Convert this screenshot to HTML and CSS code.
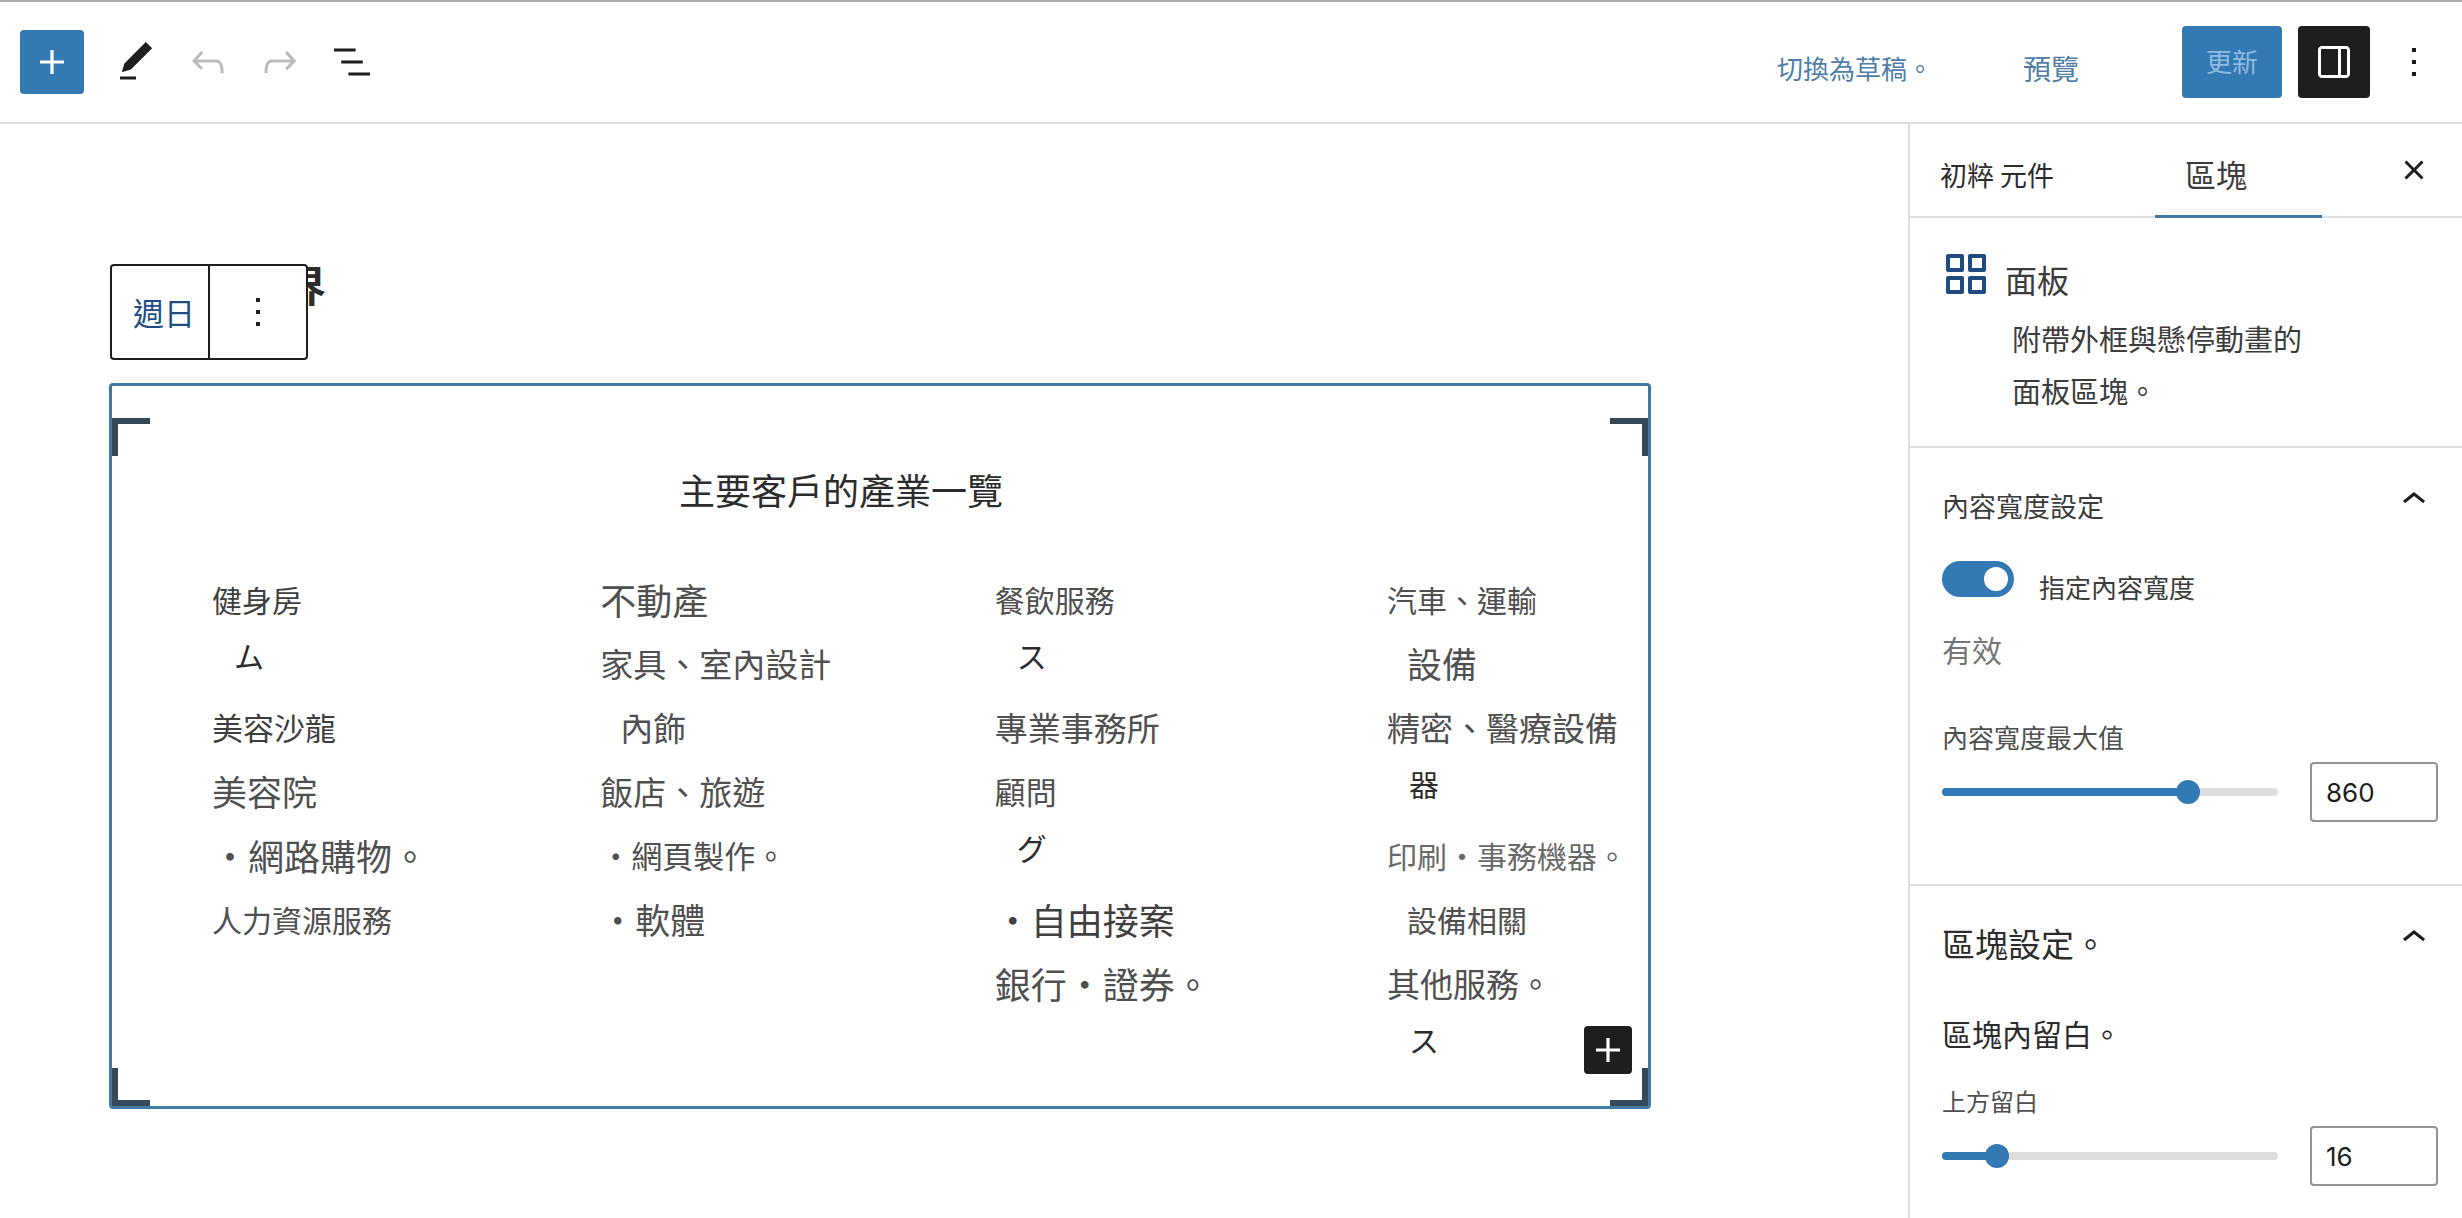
FILE: index.html
```html
<!DOCTYPE html>
<html lang="zh-Hant">
<head>
<meta charset="utf-8">
<meta name="viewport" content="width=device-width, initial-scale=1">
<title>區塊編輯器</title>
<link rel="stylesheet" href="styles.css">
</head>
<body>
<header class="topbar">
  <button class="btn btn-insert" type="button" aria-label="新增區塊"><svg class="icon" viewBox="0 0 24 24"><path d="M18 11.2h-5.2V6h-1.6v5.2H6v1.6h5.2V18h1.6v-5.2H18z"/></svg></button>
  <div class="tools">
    <button class="btn-icon" type="button" aria-label="編輯"><svg class="icon" viewBox="0 0 24 24"><path d="M20.1 5.1L16.9 2 6.2 12.7l-1.3 4.4 4.5-1.3L20.1 5.1zM4 20.8h8v-1.5H4v1.5z"/></svg></button>
    <button class="btn-icon muted" type="button" aria-label="復原"><svg class="icon" viewBox="0 0 24 24"><path d="M18.3 11.7c-.6-.6-1.4-.9-2.3-.9H6.7l2.9-3.3-1.1-1-4.5 5L8.5 16l1-1-2.7-2.7H16c.5 0 .9.2 1.3.5 1 1 1 3.4 1 4.5v.3h1.5v-.2c0-1.5 0-4.3-1.5-5.7z"/></svg></button>
    <button class="btn-icon muted" type="button" aria-label="重做"><svg class="icon" viewBox="0 0 24 24"><path d="M15.6 6.5l-1.1 1 2.9 3.3H8c-.9 0-1.7.3-2.3.9-1.4 1.5-1.4 4.2-1.4 5.6v.2h1.5v-.3c0-1.1 0-3.5 1-4.5.3-.3.7-.5 1.3-.5h9.2L14.5 15l1.1 1.1 4.6-4.6-4.6-5z"/></svg></button>
    <button class="btn-icon" type="button" aria-label="清單檢視"><svg class="icon" viewBox="0 0 24 24"><path d="M13.8 5.2H3v1.5h10.8V5.2zm-3.6 12v1.5H21v-1.5H10.2zm7.2-6H6.6v1.5h10.8v-1.5z"/></svg></button>
  </div>
  <nav class="links">
    <a class="link" href="#draft">切換為草稿。</a>
    <a class="link link-preview" href="#preview">預覽</a>
  </nav>
  <button class="btn btn-update" type="button">更新</button>
  <button class="btn btn-settings" type="button" aria-label="設定"><svg class="icon" viewBox="0 0 24 24"><path d="M18 4H6c-1.1 0-2 .9-2 2v12c0 1.1.9 2 2 2h12c1.1 0 2-.9 2-2V6c0-1.1-.9-2-2-2zm-4 14.5H6c-.3 0-.5-.2-.5-.5V6c0-.3.2-.5.5-.5h8v13zm4.5-.5c0 .3-.2.5-.5.5h-2.5v-13H18c.3 0 .5.2.5.5v12z"/></svg></button>
  <button class="btn-icon" type="button" aria-label="選項"><svg class="icon" viewBox="0 0 24 24"><path d="M13 19h-2v-2h2v2zm0-6h-2v-2h2v2zm0-6h-2V5h2v2z"/></svg></button>
</header>

<div class="workspace">
  <main class="canvas">
    <h1 class="page-title">界</h1>
    <div class="block-toolbar">
      <button class="toolbar-type" type="button">週日</button>
      <button class="toolbar-more" type="button" aria-label="更多"><svg class="icon" viewBox="0 0 24 24"><path d="M13 19h-2v-2h2v2zm0-6h-2v-2h2v2zm0-6h-2V5h2v2z"/></svg></button>
    </div>

    <section class="block">
      <span class="corner corner-tl"></span>
      <span class="corner corner-tr"></span>
      <span class="corner corner-bl"></span>
      <span class="corner corner-br"></span>
      <h2 class="block-title">主要客戶的產業一覽</h2>
      <div class="columns">
        <ul class="column">
          <li class="s dark">健身房</li>
          <li class="wrap">ム</li>
          <li class="sm dark">美容沙龍</li>
          <li class="l">美容院</li>
          <li class="xl">・網路購物。</li>
          <li class="s">人力資源服務</li>
        </ul>
        <ul class="column">
          <li class="xl">不動產</li>
          <li class="m">家具、室內設計</li>
          <li class="m indent">內飾</li>
          <li class="m">飯店、旅遊</li>
          <li class="sm">・網頁製作。</li>
          <li class="l">・軟體</li>
        </ul>
        <ul class="column">
          <li class="s">餐飲服務</li>
          <li class="wrap">ス</li>
          <li class="m">專業事務所</li>
          <li class="sm">顧問</li>
          <li class="wrap">グ</li>
          <li class="xl dark">・自由接案</li>
          <li class="xl">銀行・證券。</li>
        </ul>
        <ul class="column">
          <li class="s">汽車、運輸</li>
          <li class="l indent">設備</li>
          <li class="m">精密、醫療設備</li>
          <li class="wrap">器</li>
          <li class="s light">印刷・事務機器。</li>
          <li class="s indent">設備相關</li>
          <li class="m">其他服務。</li>
          <li class="wrap">ス</li>
        </ul>
      </div>
      <button class="btn btn-append" type="button" aria-label="新增區塊"><svg class="icon" viewBox="0 0 24 24"><path d="M18 11.2h-5.2V6h-1.6v5.2H6v1.6h5.2V18h1.6v-5.2H18z"/></svg></button>
    </section>
  </main>

  <aside class="sidebar">
    <div class="tabs">
      <button class="tab" type="button">初粹 元件</button>
      <button class="tab tab-active" type="button">區塊</button>
      <button class="btn-icon tab-close" type="button" aria-label="關閉"><svg class="icon" viewBox="0 0 24 24"><path d="M12 13.06l3.712 3.713 1.061-1.06L13.061 12l3.712-3.712-1.06-1.06L12 10.938 8.288 7.227l-1.061 1.06L10.939 12l-3.712 3.712 1.06 1.061L12 13.061z"/></svg></button>
    </div>

    <section class="card">
      <div class="card-head">
        <svg class="card-icon" viewBox="0 0 40 40"><g fill="none" stroke="currentColor" stroke-width="4" stroke-linejoin="round"><path d="M2 2h14v14H2zM24 2h14v14H24zM2 24h14v14H2zM24 24h14v14H24z"/></g></svg>
        <h2 class="card-title">面板</h2>
      </div>
      <p class="card-text">附帶外框與懸停動畫的<br>面板區塊。</p>
    </section>

    <section class="group">
      <div class="group-head">
        <h3 class="group-title">內容寬度設定</h3>
        <button class="btn-icon" type="button" aria-label="收合"><svg class="icon" viewBox="0 0 24 24"><path d="M6.5 12.4L12 8l5.5 4.4-.9 1.2L12 10l-4.5 3.6-1-1.2z"/></svg></button>
      </div>
      <div class="toggle-row">
        <input class="toggle" type="checkbox" id="use-width" checked>
        <label class="toggle-label" for="use-width">指定內容寬度</label>
      </div>
      <p class="help">有效</p>
      <label class="field-label field-label-width" for="max-width">內容寬度最大值</label>
      <div class="range-row">
        <input class="range" type="range" id="max-width" min="320" max="1040" value="860" style="--fill:75%">
        <input class="number" type="text" inputmode="numeric" value="860" aria-label="內容寬度最大值">
      </div>
    </section>

    <section class="group">
      <div class="group-head">
        <h3 class="group-title group-title-large">區塊設定。</h3>
        <button class="btn-icon" type="button" aria-label="收合"><svg class="icon" viewBox="0 0 24 24"><path d="M6.5 12.4L12 8l5.5 4.4-.9 1.2L12 10l-4.5 3.6-1-1.2z"/></svg></button>
      </div>
      <h4 class="subhead">區塊內留白。</h4>
      <label class="field-label field-label-small" for="pad-top">上方留白</label>
      <div class="range-row">
        <input class="range" type="range" id="pad-top" min="0" max="116" value="16" style="--fill:15%">
        <input class="number" type="text" inputmode="numeric" value="16" aria-label="上方留白">
      </div>
    </section>
  </aside>
</div>
</body>
</html>
```
FILE: styles.css
```css
:root {
  --blue: #3379b4;
  --line-blue: #417aa3;
  --ink: #1e1e1e;
  --rule: #dedede;
}

* { box-sizing: border-box; }

body {
  margin: 0;
  height: 100vh;
  display: flex;
  flex-direction: column;
  overflow: hidden;
  background: #fff;
  color: #3c3c3c;
  font-family: "Noto Sans CJK TC", "Noto Sans", sans-serif;
}

h1, h2, h3, h4, p, ul { margin: 0; padding: 0; font-weight: 400; }
ul { list-style: none; }

button {
  margin: 0;
  padding: 0;
  border: 0;
  background: none;
  color: inherit;
  font: inherit;
  cursor: pointer;
}

.icon { display: block; width: 48px; height: 48px; fill: currentColor; }
.btn-icon { flex: none; color: var(--ink); }
.muted { color: #bcbcbc; }

.btn {
  display: flex;
  flex: none;
  align-items: center;
  justify-content: center;
  border-radius: 4px;
  color: #fff;
}

/* Top bar */
.topbar {
  display: flex;
  flex: none;
  align-items: center;
  height: 124px;
  padding: 0 24px 0 20px;
  border-top: 2px solid #acacac;
  border-bottom: 2px solid var(--rule);
}
.btn-insert { width: 64px; height: 64px; background: var(--blue); }
.tools { display: flex; gap: 24px; margin-left: 28px; }
.links {
  display: flex;
  align-items: center;
  gap: 90px;
  margin-left: auto;
  margin-right: 103px;
  padding-top: 12px;
}
.link { color: #4f7fa8; font-size: 26px; line-height: 40px; text-decoration: none; }
.link-preview { font-size: 28px; }
.btn-update {
  width: 100px;
  height: 72px;
  padding-bottom: 4px;
  background: var(--blue);
  color: #8fbbdf;
  font-size: 26px;
}
.btn-settings { width: 72px; height: 72px; margin: 0 20px 0 16px; background: var(--ink); }

.workspace { display: flex; flex: 1; min-height: 0; }

/* Canvas */
.canvas { position: relative; flex: 1; min-width: 0; padding: 134px 257px 0 109px; }
.page-title {
  margin-bottom: 73px;
  padding-left: 175px;
  color: #2c2c2c;
  font-size: 42px;
  font-weight: 700;
  line-height: 52px;
}
.block-toolbar {
  position: absolute;
  top: 140px;
  left: 110px;
  display: flex;
  width: 198px;
  height: 96px;
  border: 2px solid var(--ink);
  border-radius: 4px;
  background: #fff;
}
.toolbar-type {
  width: 98px;
  padding: 0 0 2px 8px;
  border-right: 2px solid var(--ink);
  color: #1f4f82;
  font-size: 31px;
}
.toolbar-more { display: flex; flex: 1; align-items: center; justify-content: center; color: var(--ink); }

.block {
  position: relative;
  padding: 75px 21px 27px 100px;
  border: 3px solid var(--line-blue);
  border-radius: 4px;
}
.block-title {
  margin: 0 157px 50px 0;
  color: #2c2c2c;
  font-size: 36px;
  line-height: 56px;
  text-align: center;
}
.corner { position: absolute; width: 38px; height: 38px; border: 0 solid #34495a; }
.corner-tl { top: 32px; left: 0; border-width: 6px 0 0 6px; }
.corner-tr { top: 32px; right: 0; border-width: 6px 6px 0 0; }
.corner-bl { bottom: 0; left: 0; border-width: 0 0 6px 6px; }
.corner-br { right: 0; bottom: 0; border-width: 0 6px 6px 0; }
.btn-append {
  position: absolute;
  right: 16px;
  bottom: 32px;
  width: 48px;
  height: 48px;
  background: var(--ink);
}

.columns { display: grid; grid-template-columns: 388fr 394fr 392fr 240px; }
.column { color: #505050; line-height: 64px; white-space: nowrap; }
.s { font-size: 30px; }
.sm { font-size: 31px; }
.m { font-size: 33px; }
.l { font-size: 35px; }
.xl { font-size: 36px; }
.dark { color: #3f3f3f; }
.light { color: #6a6a6a; }
.indent { padding-left: 20px; }
.wrap { padding: 0 0 16px 22px; color: #2c2c2c; font-size: 30px; line-height: 48px; }

/* Sidebar */
.sidebar { flex: none; width: 554px; border-left: 2px solid var(--rule); overflow: hidden; }
.tabs { display: flex; height: 94px; padding-right: 24px; border-bottom: 2px solid var(--rule); }
.tab {
  width: 245px;
  height: 94px;
  padding: 6px 0 0 30px;
  color: #2c2c2c;
  font-size: 27px;
  text-align: left;
}
.tab-active {
  width: 167px;
  padding: 8px 0 0 30px;
  border-bottom: 3px solid var(--line-blue);
  color: #3c3c3c;
  font-size: 31px;
}
.tab-close { margin-left: auto; }

.card { padding: 36px 24px 30px 36px; border-bottom: 2px solid var(--rule); }
.card-head { display: flex; align-items: flex-start; gap: 19px; }
.card-icon { width: 40px; height: 40px; color: #1f4b80; }
.card-title { font-size: 32px; line-height: 50px; }
.card-text { margin-top: 8px; padding-left: 66px; font-size: 29px; line-height: 52px; }

.group { padding: 28px 24px 62px 32px; border-bottom: 2px solid var(--rule); }
.group-head { display: flex; align-items: flex-start; justify-content: space-between; }
.group-title { font-size: 27px; line-height: 60px; }
.group-title-large { color: #2c2c2c; font-size: 33px; line-height: 58px; }

.toggle-row { display: flex; align-items: flex-start; gap: 25px; margin-top: 25px; }
.toggle {
  display: flex;
  align-items: center;
  justify-content: flex-end;
  width: 72px;
  height: 36px;
  margin: 0;
  padding: 6px;
  appearance: none;
  border-radius: 18px;
  background: var(--blue);
}
.toggle::before { content: ""; width: 24px; height: 24px; border-radius: 50%; background: #fff; }
.toggle-label { font-size: 26px; line-height: 52px; }
.help { margin-top: 12px; color: #777; font-size: 30px; line-height: 48px; }

.subhead { margin-top: 37px; color: #2c2c2c; font-size: 30px; line-height: 48px; }
.field-label { display: block; color: #505050; line-height: 40px; }
.field-label-width { margin-top: 44px; font-size: 26px; }
.field-label-small { margin-top: 24px; font-size: 24px; }

.range-row { display: flex; align-items: center; gap: 32px; margin-top: 5px; }
.range {
  flex: 1;
  min-width: 0;
  height: 24px;
  margin: 0;
  appearance: none;
  background: none;
}
.range::-webkit-slider-runnable-track {
  height: 8px;
  border-radius: 4px;
  background: linear-gradient(to right, var(--blue) var(--fill), #ddd var(--fill));
}
.range::-webkit-slider-thumb {
  width: 24px;
  height: 24px;
  margin-top: -8px;
  appearance: none;
  border-radius: 50%;
  background: var(--blue);
}
.number {
  width: 128px;
  height: 60px;
  padding: 0 14px;
  border: 2px solid #949494;
  border-radius: 4px;
  background: #fff;
  color: var(--ink);
  font-family: Inter, sans-serif;
  font-size: 26px;
}
```
